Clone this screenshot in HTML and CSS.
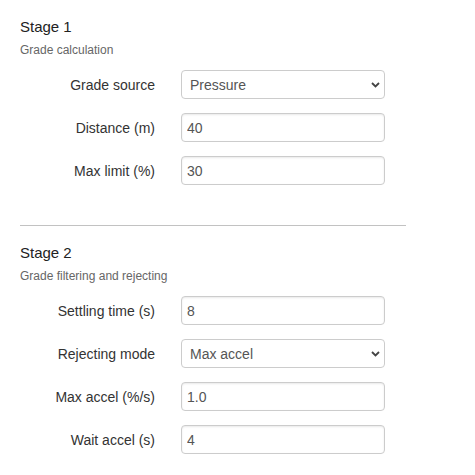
FILE: index.html
```html
<!DOCTYPE html>
<html lang="en">
<head>
<meta charset="utf-8">
<title>Stages</title>
<link rel="stylesheet" href="styles.css">
</head>
<body>
<div class="page">
  <section class="stage">
    <h3 class="stage-title">Stage 1</h3>
    <p class="stage-sub">Grade calculation</p>
    <div class="form">
      <label class="form-label" for="src">Grade source</label>
      <div class="select-wrap">
        <select id="src" class="control select">
          <option>Pressure</option>
        </select>
        <svg class="chev" width="9" height="6" viewBox="0 0 9 6"><path d="M1 1 L4.5 4.5 L8 1" fill="none" stroke="#444" stroke-width="1.8"/></svg>
      </div>
      <label class="form-label" for="dist">Distance (m)</label>
      <input id="dist" class="control" type="text" value="40">
      <label class="form-label" for="lim">Max limit (%)</label>
      <input id="lim" class="control" type="text" value="30">
    </div>
  </section>
  <hr class="divider">
  <section class="stage">
    <h3 class="stage-title">Stage 2</h3>
    <p class="stage-sub">Grade filtering and rejecting</p>
    <div class="form">
      <label class="form-label" for="set">Settling time (s)</label>
      <input id="set" class="control" type="text" value="8">
      <label class="form-label" for="mode">Rejecting mode</label>
      <div class="select-wrap">
        <select id="mode" class="control select">
          <option>Max accel</option>
        </select>
        <svg class="chev" width="9" height="6" viewBox="0 0 9 6"><path d="M1 1 L4.5 4.5 L8 1" fill="none" stroke="#444" stroke-width="1.8"/></svg>
      </div>
      <label class="form-label" for="acc">Max accel (%/s)</label>
      <input id="acc" class="control" type="text" value="1.0">
      <label class="form-label" for="wait">Wait accel (s)</label>
      <input id="wait" class="control" type="text" value="4">
    </div>
  </section>
</div>
</body>
</html>
```

FILE: styles.css
```css
html, body {
  margin: 0;
  padding: 0;
  background: #fff;
}
body {
  font-family: "Liberation Sans", Arial, sans-serif;
  color: #333;
}
.page {
  padding: 17px 20px 0 20px;
  width: 386px;
}
.stage-title {
  margin: 0;
  font-size: 15px;
  line-height: 20px;
  font-weight: normal;
  color: #222;
}
.stage-sub {
  margin: 5px 0 12px 0;
  font-size: 12px;
  line-height: 16px;
  color: #666;
}
.form {
  display: grid;
  grid-template-columns: 135px 204px;
  column-gap: 26px;
  row-gap: 14px;
  align-items: center;
}
.form-label {
  text-align: right;
  font-size: 14px;
  color: #333;
}
.control {
  box-sizing: border-box;
  width: 204px;
  height: 29px;
  margin: 0;
  padding: 0 5px;
  border: 1px solid #ccc;
  border-radius: 4px;
  background: #fff;
  box-shadow: inset 0 1px 2px rgba(0,0,0,0.09);
  font-family: "Liberation Sans", Arial, sans-serif;
  font-size: 14px;
  color: #555;
  outline: none;
}
.select-wrap {
  position: relative;
  width: 204px;
  height: 29px;
}
.select {
  -webkit-appearance: none;
  appearance: none;
  padding-left: 8px;
  box-shadow: none;
}
.chev {
  position: absolute;
  right: 5px;
  top: 12px;
  pointer-events: none;
}
.divider {
  margin: 40px 0 17px 0;
  border: 0;
  border-top: 1px solid #c2c2c2;
  height: 0;
}
```
